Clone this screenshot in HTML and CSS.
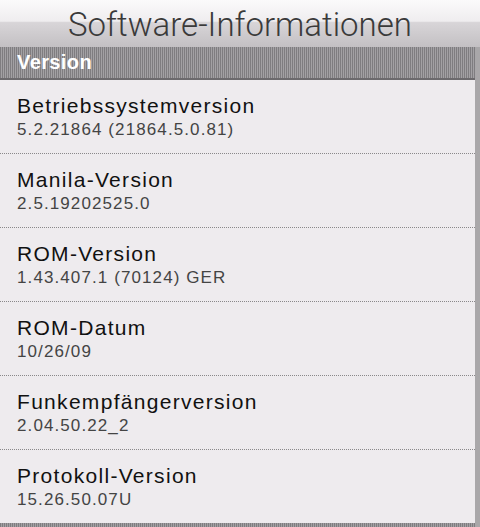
FILE: index.html
```html
<!DOCTYPE html>
<html lang="de">

<head>
    <meta charset="UTF-8">
    <meta name="viewport" content="width=device-width, initial-scale=1.0">
    <title>Software-Informationen</title>
    <link rel="stylesheet" href="styles.css">
</head>

<body>
    <div class="header">
        <h1>Software-Informationen</h1>
    </div>

    <div class="content">
        <div class="list">
            <div class="section-title">Version</div>

            <div class="item">
                <div class="item-label">Betriebssystemversion</div>
                <div class="item-value">5.2.21864 (21864.5.0.81)</div>
            </div>
            <div class="item">
                <div class="item-label">Manila-Version</div>
                <div class="item-value">2.5.19202525.0</div>
            </div>
            <div class="item">
                <div class="item-label">ROM-Version</div>
                <div class="item-value">1.43.407.1 (70124) GER</div>
            </div>
            <div class="item">
                <div class="item-label">ROM-Datum</div>
                <div class="item-value">10/26/09</div>
            </div>
            <div class="item">
                <div class="item-label">Funkempfängerversion</div>
                <div class="item-value">2.04.50.22_2</div>
            </div>
            <div class="item last">
                <div class="item-label">Protokoll-Version</div>
                <div class="item-value">15.26.50.07U</div>
            </div>

            <div class="section-title"></div>
        </div>
        <div class="scrollbar"></div>
    </div>
</body>

</html>
```

FILE: styles.css
```css
html,
body {
    overflow: hidden;
}

body {
    margin: 0;
    width: 480px;
    height: 527px;
    font-family: "Liberation Sans", Arial, sans-serif;
    background-color: #eeebee;
}

.header {
    height: 47px;
    background: linear-gradient(to bottom, #fbfafb 0%, #efedef 45%, #d8d5d8 48%, #c3c0c3 100%);
    display: flex;
    justify-content: center;
    align-items: center;
}

h1 {
    margin: 0;
    font-family: Roboto, sans-serif;
    font-weight: 300;
    font-size: 33px;
    color: #3a3a3a;
    padding-top: 2px;
}

.content {
    display: flex;
    height: 480px;
    overflow: hidden;
}

.list {
    flex: 1;
}

.scrollbar {
    width: 5px;
    background-color: #a9a7a9;
}

.section-title {
    height: 31px;
    padding-left: 17px;
    line-height: 31px;
    color: white;
    font-size: 20px;
    font-weight: bold;
    letter-spacing: 0.4px;
    background-color: #8f8d90;
    background-image: repeating-linear-gradient(to right, #7f7d80 0, #7f7d80 1px, #a3a1a4 1px, #a3a1a4 2px);
    border-bottom: 2px solid #6c6a6d;
}

.item {
    height: 73px;
    padding-left: 17px;
    border-bottom: 1px dotted #8a888a;
    display: flex;
    flex-direction: column;
    justify-content: center;
}

.item.last {
    border-bottom: none;
}

.item-label {
    font-size: 21px;
    letter-spacing: 1.3px;
    color: #111;
    margin-bottom: 2px;
}

.item-value {
    font-size: 17px;
    letter-spacing: 1.1px;
    color: #444;
}
```
